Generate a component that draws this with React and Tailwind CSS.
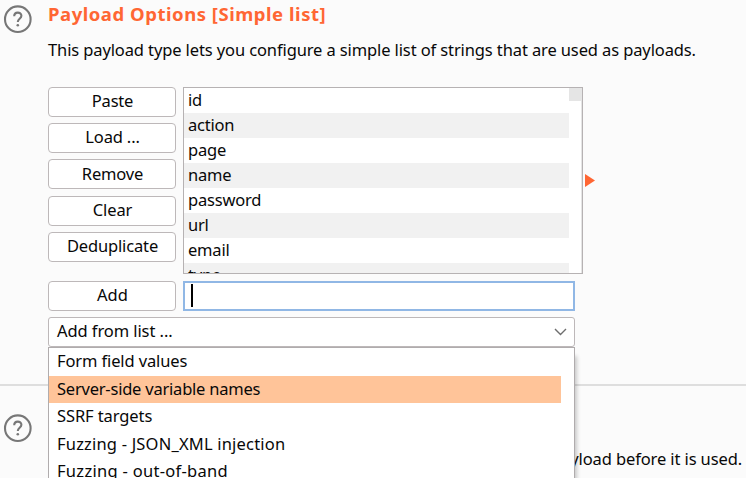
const buttons = [
  ["Paste", "mb-[6px] pb-[2px] tracking-[-0.2px]"],
  ["Load ...", "mb-[6px] pb-[2px] tracking-[-0.15px]"],
  ["Remove", "mb-[7px] tracking-[-0.15px]"],
  ["Clear", "mb-[6px] pb-[2px] tracking-[-0.1px]"],
  ["Deduplicate", "mb-[19px] pb-[2px] tracking-[-0.15px]"],
  ["Add", "pb-[2px]"],
];
const items = ["id", "action", "page", "name", "password", "url", "email", "type"];
const options = [
  ["Form field values", "h-[28px] tracking-[-0.12px]"],
  ["Server-side variable names", "h-[27px] bg-[#ffc499] tracking-[-0.22px]"],
  ["SSRF targets", "h-[28px] tracking-[-0.1px]"],
  ["Fuzzing - JSON_XML injection", "h-[27px] tracking-[0.19px]"],
  ["Fuzzing - out-of-band", "h-[28px] tracking-[0.29px]"],
];

function HelpIcon() {
  return (
    <svg className="ml-[3px] h-[30px] w-[30px] shrink-0" viewBox="0 0 30 30" fill="none" stroke="#777777">
      <circle cx="14.8" cy="15.2" r="12.8" strokeWidth="2.1" />
      <path d="M11.2 12.3C11.2 7.4 18.4 7.6 18.4 11.7C18.4 14.8 14.8 14.8 14.8 18" strokeWidth="2.1" />
      <circle cx="14.8" cy="21.3" r="1.3" fill="#777777" stroke="none" />
    </svg>
  );
}

export default function App() {
  return (
    <div className="flex h-[478px] w-[746px] flex-col overflow-hidden bg-[#fbfbfb] font-['Noto_Sans','Noto_Sans_CJK_SC',sans-serif] text-[16.5px] whitespace-nowrap text-[#080808]">
      <section className="flex h-[384px] shrink-0">
        <div className="w-12 shrink-0 pt-1">
          <HelpIcon />
        </div>
        <div className="w-[547px]">
          <h1 className="h-[36px] pt-[2px] text-[18.5px] leading-6 font-bold tracking-[0.53px] text-[#ff6633]">Payload Options [Simple list]</h1>
          <p className="h-[51px] pt-[2px] leading-6 tracking-[-0.115px]">This payload type lets you configure a simple list of strings that are used as payloads.</p>
          <div className="flex">
            <div className="mr-[7px] flex w-[128px] flex-col">
              {buttons.map(([label, style]) => (
                <button key={label} className={`flex h-[30px] shrink-0 items-center justify-center rounded-[4px] border border-[#bdb8b9] bg-white pl-px leading-6 ${style}`}>
                  {label}
                </button>
              ))}
            </div>
            <div className="flex w-[400px] flex-col">
              <div className="flex h-[187px] overflow-hidden border border-[#b6b2b3] bg-white">
                <div className="w-[385px]">
                  {items.map((t) => (
                    <div key={t} className="h-[25px] pl-1 leading-6 tracking-[-0.2px] even:bg-[#f1f1f1]">{t}</div>
                  ))}
                </div>
                <div className="flex-1 border-r border-[#e5e5e5]">
                  <div className="h-[13px] bg-[#e5e5e5]" />
                </div>
              </div>
              <div className="mt-[7px] h-[30px] w-[392px] border-2 border-[#90b7e5] bg-white pt-px pl-[6px]">
                <div className="h-[23px] w-[2px] bg-black" />
              </div>
            </div>
            <svg className="mt-[87px] ml-[2px] h-[13px] w-[10px] shrink-0" viewBox="0 0 10 13">
              <path d="M0 0L10 6.5L0 13Z" fill="#ff6633" />
            </svg>
          </div>
          <div className="relative mt-[6px] w-[527px]">
            <div className="flex h-[30px] items-center justify-between rounded-[3px] border border-[#bdb8b9] bg-white pr-[7px] pb-[2px] pl-2 leading-6">
              <span className="tracking-[-0.08px]">Add from list ...</span>
              <svg className="mt-[2px] h-[8px] w-[13px]" viewBox="0 0 13 8" fill="none" stroke="#6e6e6e" strokeWidth="1.4">
                <path d="M1 1L6.5 6.6L12 1" />
              </svg>
            </div>
            <div className="absolute top-[30px] left-0 z-10 h-[140px] w-[527px] border border-[#b0acad] bg-white shadow-[4px_7px_4px_-2px_rgba(0,0,0,0.2)]">
              {options.map(([label, style]) => (
                <div key={label} className={`w-[512px] pl-2 leading-[26px] ${style}`}>{label}</div>
              ))}
            </div>
          </div>
        </div>
      </section>
      <section className="flex h-[94px] shrink-0 border-t-2 border-[#dedede]">
        <div className="w-12 shrink-0 pt-[27px]">
          <HelpIcon />
        </div>
        <p className="w-[694px] pt-[61px] text-right leading-6 tracking-[-0.115px]">payload before it is used.</p>
      </section>
    </div>
  );
}
